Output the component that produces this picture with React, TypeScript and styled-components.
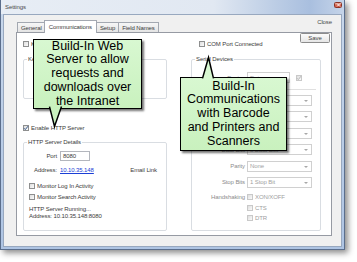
import React from "react";
import styled, { createGlobalStyle, css } from "styled-components";

const GlobalStyle = createGlobalStyle`
    html, body {
        margin: 0;
        padding: 0;
        background: #ffffff;
    }
    body {
        font-family: "Liberation Sans", Arial, sans-serif;
    }
    * {
        box-sizing: border-box;
    }
`;

const Check = ({ checked, dim }: { checked?: boolean; dim?: boolean }) => (
    <Box $dim={dim}>
        {checked && (
            <svg width="6" height="6" viewBox="0 0 6 6">
                <path
                    d="M0.8 3.1 L2.3 4.6 L5.1 1.1"
                    fill="none"
                    stroke={dim ? "#b8b8b8" : "#3d5b8a"}
                    strokeWidth="1"
                />
            </svg>
        )}
    </Box>
);

const CheckItem = ({
    label,
    checked,
    dim,
}: {
    label: string;
    checked?: boolean;
    dim?: boolean;
}) => (
    <CheckRow $dim={dim}>
        <Check checked={checked} dim={dim} />
        <span>{label}</span>
    </CheckRow>
);

const serialRows = [
    { label: "Port", value: "COM1" },
    { label: "Baud Rate", value: "9600" },
    { label: "Mode", value: "RS-232" },
    { label: "Data Bits", value: "8 Data Bits" },
    { label: "Parity", value: "None" },
    { label: "Stop Bits", value: "1 Stop Bit" },
];

const App = () => {
    return (
        <Page>
            <GlobalStyle />
            <Window>
                <TitleBar>
                    <Title>Settings</Title>
                    <CloseBtn>
                        <svg width="5" height="4" viewBox="0 0 5 4">
                            <path d="M1 0.5 L4 3.5 M4 0.5 L1 3.5" stroke="#fff" strokeWidth="0.9" />
                        </svg>
                    </CloseBtn>
                </TitleBar>
                <Client>
                    <Header>
                        <Tabs>
                            <Tab>General</Tab>
                            <Tab $active>Communications</Tab>
                            <Tab>Setup</Tab>
                            <Tab>Field Names</Tab>
                        </Tabs>
                        <CloseLink>Close</CloseLink>
                    </Header>
                    <Panel>
                        <LeftCol>
                            <TopCheck>
                                <CheckItem label="Keyboard Wedge Connected" />
                            </TopCheck>
                            <Group $h={44}>
                                <Legend>Keyboard Wedge</Legend>
                                <KbBody>
                                    <Select $w={109}>Start Key: None</Select>
                                </KbBody>
                            </Group>
                            <HttpCheck>
                                <CheckItem label="Enable HTTP Server" checked />
                            </HttpCheck>
                            <Group $h={93} $gap={6}>
                                <Legend>HTTP Server Details</Legend>
                                <HttpBody>
                                    <FormRow>
                                        <FormLabel>Port</FormLabel>
                                        <TextInput>8080</TextInput>
                                    </FormRow>
                                    <FormRow $gap={5}>
                                        <FormLabel>Address:</FormLabel>
                                        <Link>10.10.35.148</Link>
                                        <EmailLink>Email Link</EmailLink>
                                    </FormRow>
                                    <Monitors>
                                        <CheckItem label="Monitor Log In Activity" />
                                        <CheckItem label="Monitor Search Activity" />
                                    </Monitors>
                                    <Status>
                                        HTTP Server Running...
                                        <br />
                                        Address: 10.10.35.148:8080
                                    </Status>
                                </HttpBody>
                            </Group>
                        </LeftCol>
                        <RightCol>
                            <RightTop>
                                <TopCheck>
                                    <CheckItem label="COM Port Connected" />
                                </TopCheck>
                                <SaveButton>Save</SaveButton>
                            </RightTop>
                            <Group $h={176} $right={10}>
                                <Legend>Serial Devices</Legend>
                                <SerialBody>
                                    <FieldRow>
                                        <FieldLabel>Device</FieldLabel>
                                        <DeviceCell>
                                            <Select $w={43} $dim>
                                                Datamax
                                            </Select>
                                            <Check checked dim />
                                        </DeviceCell>
                                    </FieldRow>
                                    <Separator />
                                    <SerialList>
                                        {serialRows.map((r) => (
                                            <FieldRow key={r.label}>
                                                <FieldLabel>{r.label}</FieldLabel>
                                                <Select $w={65} $dim>
                                                    {r.value}
                                                </Select>
                                            </FieldRow>
                                        ))}
                                    </SerialList>
                                    <HandRow>
                                        <FieldLabel>Handshaking</FieldLabel>
                                        <HandList>
                                            <CheckItem label="XON/XOFF" dim />
                                            <CheckItem label="CTS" dim />
                                            <CheckItem label="DTR" dim />
                                        </HandList>
                                    </HandRow>
                                </SerialBody>
                            </Group>
                        </RightCol>
                    </Panel>
                </Client>
            </Window>

            <Callout $x={33} $y={39} $w={109} $h={70}>
                Build-In Web
                <br />
                Server to allow
                <br />
                requests and
                <br />
                downloads over
                <br />
                the Intranet
                <Pointer>
                    <path
                        d="M15.5 66.6 L20.5 86.5 L27.5 66.6"
                        fill="#c9f1be"
                        stroke="#000"
                        strokeWidth="1.5"
                    />
                </Pointer>
            </Callout>
            <Callout $x={180} $y={77} $w={107} $h={74}>
                Build-In
                <br />
                Communications
                <br />
                with Barcode
                <br />
                and Printers and
                <br />
                Scanners
                <Pointer>
                    <path
                        d="M21.5 0.4 L27.5 -20.5 L32.5 0.4"
                        fill="#d8f8d1"
                        stroke="#000"
                        strokeWidth="1.5"
                    />
                </Pointer>
            </Callout>
        </Page>
    );
};

const Page = styled.div`
    position: relative;
    width: 357px;
    height: 262px;
    overflow: hidden;
    background: #ffffff;
`;

const Window = styled.div`
    width: 345px;
    height: 250px;
    display: flex;
    flex-direction: column;
    border: 1px solid #5b6e8c;
    border-top: none;
    padding: 0 2px 2px;
    background: linear-gradient(to bottom, #c9d8ec, #aec4e3);
    box-shadow: 3px 3px 6px rgba(0, 0, 0, 0.45);
    font-size: 6px;
    letter-spacing: -0.1px;
    color: #3b3b3b;
`;

const TitleBar = styled.div`
    height: 14px;
    margin: 0 -2px;
    padding: 0 2px 0 4px;
    display: flex;
    align-items: flex-start;
    justify-content: space-between;
    background: linear-gradient(
        to right,
        #e7edf5 0%,
        #e1e8f2 62%,
        #bccde5 80%,
        #a9bfdf 90%,
        #c5d4e9 100%
    );
`;

const Title = styled.span`
    margin-top: 4px;
    font-size: 6px;
    line-height: 7px;
    color: #4a4a4a;
`;

const CloseBtn = styled.div`
    margin-top: 2px;
    width: 8px;
    height: 6px;
    display: flex;
    align-items: center;
    justify-content: center;
    border: 1px solid #8a3426;
    border-radius: 1.5px;
    background: linear-gradient(#e6a190, #c8432f);
`;

const Client = styled.div`
    flex: 1;
    display: flex;
    flex-direction: column;
    background: #f0f0f0;
    border: 1px solid #98a8bf;
    padding: 0 9px 10px 12px;
`;

const Header = styled.div`
    height: 17px;
    display: flex;
    align-items: flex-end;
    justify-content: space-between;
`;

const Tabs = styled.div`
    display: flex;
    align-items: flex-end;
    margin-left: 1px;
`;

const Tab = styled.div<{ $active?: boolean }>`
    height: 10px;
    padding: 0 3px;
    display: flex;
    align-items: center;
    border: 1px solid #a3a8b1;
    border-bottom: none;
    margin-right: -1px;
    background: linear-gradient(#f6f6f6, #e4e4e4);
    color: #3b3b3b;
    ${(p) =>
        p.$active &&
        css`
            position: relative;
            z-index: 1;
            height: 13px;
            margin: 0 -1px -1px -1px;
            padding: 0 4px 1px;
            background: #ffffff;
        `}
`;

const CloseLink = styled.span`
    align-self: flex-start;
    margin-top: 3px;
    line-height: 8px;
    color: #4a4a4a;
`;

const Panel = styled.div`
    flex: 1;
    display: flex;
    gap: 24px;
    padding: 0 0 0 6px;
    background: #ffffff;
    border: 1px solid #969aa3;
`;

const LeftCol = styled.div`
    width: 144px;
    display: flex;
    flex-direction: column;
`;

const RightCol = styled.div`
    flex: 1;
    display: flex;
    flex-direction: column;
`;

const TopCheck = styled.div`
    margin-top: 7px;
`;

const RightTop = styled.div`
    display: flex;
    justify-content: space-between;
    align-items: flex-start;
    padding-left: 8px;
    height: 15px;
`;

const SaveButton = styled.div`
    width: 30px;
    height: 10px;
    margin-right: 1px;
    display: flex;
    align-items: center;
    justify-content: center;
    border: 1px solid #8c8c8c;
    border-radius: 1.5px;
    background: linear-gradient(#fbfbfb, #e6e6e6);
    color: #444;
`;

const HttpCheck = styled.div`
    margin-top: 25px;
`;

const CheckRow = styled.div<{ $dim?: boolean }>`
    height: 8px;
    display: flex;
    align-items: center;
    gap: 2px;
    white-space: nowrap;
    color: ${(p) => (p.$dim ? "#a0a0a0" : "#3b3b3b")};
`;

const Box = styled.span<{ $dim?: boolean }>`
    width: 6px;
    height: 6px;
    flex: none;
    display: flex;
    align-items: center;
    justify-content: center;
    border: 1px solid ${(p) => (p.$dim ? "#c9c9c9" : "#8e8f8f")};
    background: linear-gradient(135deg, #dedede, #fbfbfb);
    svg {
        margin: -1px;
    }
`;

const Group = styled.fieldset<{ $h: number; $gap?: number; $right?: number }>`
    height: ${(p) => p.$h}px;
    margin: ${(p) => p.$gap ?? 7}px ${(p) => p.$right ?? 0}px 0 0;
    padding: 0;
    min-width: 0;
    border: 1px solid #d9dde2;
    border-radius: 2px;
`;

const Legend = styled.legend`
    margin-left: 3px;
    padding: 0 1px;
    line-height: 8px;
    color: #3b3b3b;
`;

const KbBody = styled.div`
    padding: 7px 0 0 9px;
`;

const Select = styled.div<{ $w: number; $dim?: boolean }>`
    position: relative;
    width: ${(p) => p.$w}px;
    height: 11px;
    padding-left: 2px;
    display: flex;
    align-items: center;
    white-space: nowrap;
    overflow: hidden;
    border: 1px solid #d0d0d0;
    background: #ffffff;
    color: ${(p) => (p.$dim ? "#a2a2a2" : "#c0c0c0")};
    &::after {
        content: "";
        position: absolute;
        right: 3px;
        top: 4px;
        border-left: 2px solid transparent;
        border-right: 2px solid transparent;
        border-top: 2px solid #a8a8a8;
    }
`;

const HttpBody = styled.div`
    display: flex;
    flex-direction: column;
`;

const FormRow = styled.div<{ $gap?: number }>`
    margin-top: ${(p) => p.$gap ?? 5}px;
    display: grid;
    grid-template-columns: 33px auto 1fr auto;
    column-gap: 3px;
    align-items: center;
    min-height: 8px;
`;

const FormLabel = styled.span`
    text-align: right;
    color: #3b3b3b;
`;

const TextInput = styled.div`
    width: 30px;
    height: 10px;
    padding-left: 2px;
    display: flex;
    align-items: center;
    border: 1px solid #b3b6bd;
    background: #ffffff;
    color: #3b3b3b;
`;

const Link = styled.span`
    color: #1b3fd6;
    text-decoration: underline;
`;

const EmailLink = styled.span`
    grid-column: 4;
    margin-right: 9px;
    color: #3b3b3b;
`;

const Monitors = styled.div`
    margin-top: 8px;
    padding-left: 5px;
    display: flex;
    flex-direction: column;
    gap: 3px;
`;

const Status = styled.div`
    margin-top: 5px;
    padding-left: 5px;
    line-height: 7px;
    color: #3b3b3b;
`;

const SerialBody = styled.div`
    display: flex;
    flex-direction: column;
    padding-top: 9px;
`;

const FieldRow = styled.div`
    height: 11px;
    display: grid;
    grid-template-columns: 53px auto;
    column-gap: 2px;
    align-items: center;
`;

const FieldLabel = styled.span`
    text-align: right;
    white-space: nowrap;
    color: #8c8c8c;
`;

const DeviceCell = styled.div`
    display: flex;
    align-items: center;
    gap: 6px;
`;

const Separator = styled.div`
    height: 1px;
    margin: 6px 4px 0;
    background: #e0e0e0;
`;

const SerialList = styled.div`
    margin-top: 5px;
    display: flex;
    flex-direction: column;
    gap: 5.4px;
`;

const HandRow = styled.div`
    margin-top: 5.5px;
    display: grid;
    grid-template-columns: 53px auto;
    column-gap: 2px;
    align-items: start;
    ${FieldLabel} {
        line-height: 8px;
    }
`;

const HandList = styled.div`
    display: flex;
    flex-direction: column;
    gap: 2.5px;
`;

const Callout = styled.div<{ $x: number; $y: number; $w: number; $h: number }>`
    position: absolute;
    left: ${(p) => p.$x}px;
    top: ${(p) => p.$y}px;
    width: ${(p) => p.$w}px;
    height: ${(p) => p.$h}px;
    display: flex;
    flex-direction: column;
    justify-content: center;
    border: 1.5px solid #000000;
    background: linear-gradient(#d8f8d1, #c9f1be);
    box-shadow: 2px 2px 2px rgba(0, 0, 0, 0.55);
    font-family: "Liberation Sans", Arial, sans-serif;
    font-size: 12.5px;
    line-height: 13.8px;
    text-align: center;
    color: #000000;
`;

const Pointer = styled.svg.attrs({ width: 1, height: 1 })`
    position: absolute;
    left: 0;
    top: 0;
    overflow: visible;
`;

export default App;
